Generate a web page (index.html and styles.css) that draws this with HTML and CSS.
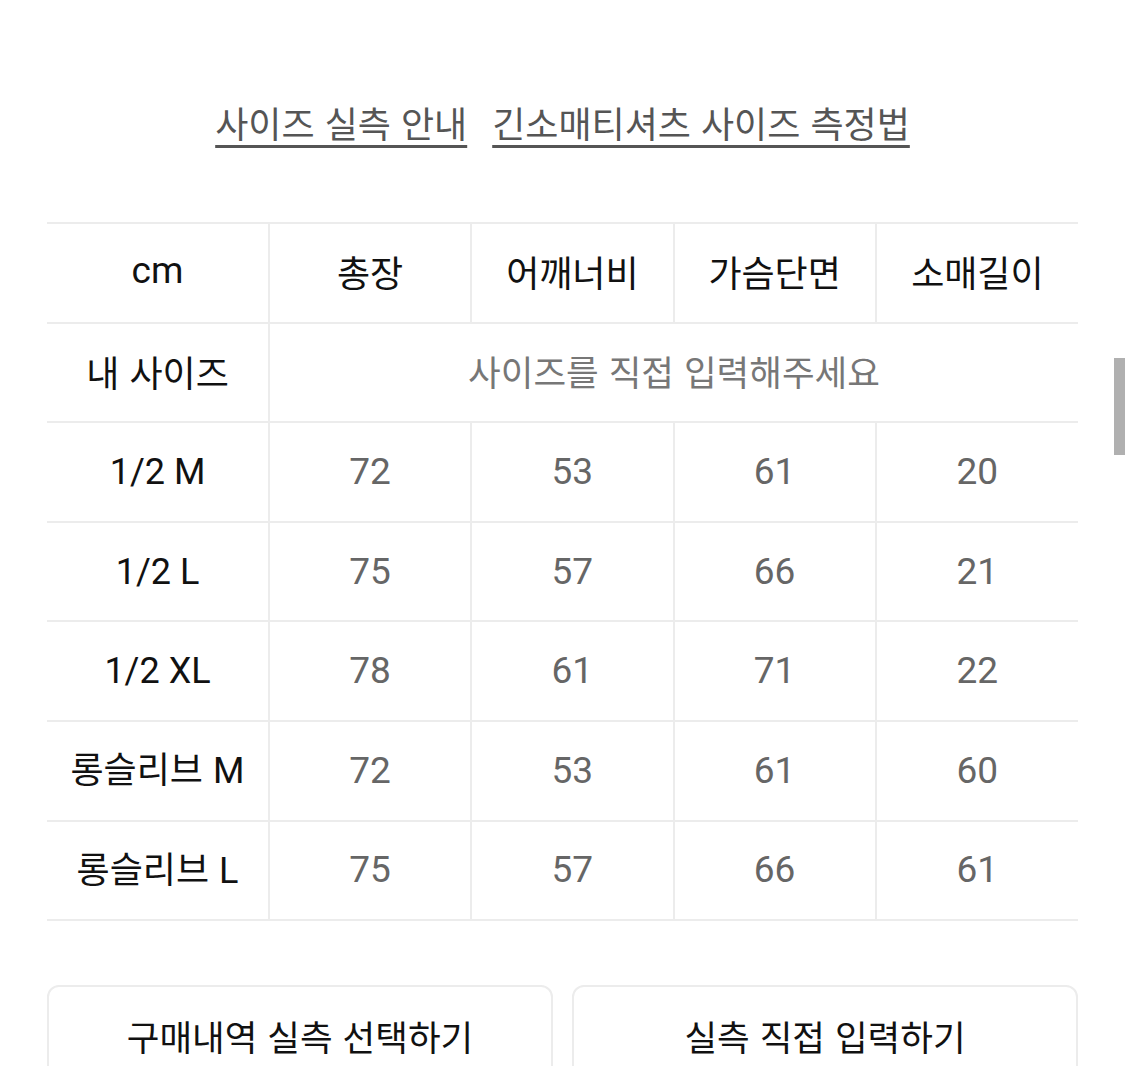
FILE: index.html
```html
<!DOCTYPE html>
<html lang="ko">
<head>
<meta charset="utf-8">
<link rel="stylesheet" href="styles.css">
</head>
<body>
<div class="page">
  <nav class="links">
    <a class="link">사이즈 실측 안내</a>
    <a class="link">긴소매티셔츠 사이즈 측정법</a>
  </nav>
  <table class="size-table">
    <colgroup>
      <col class="c-label"><col class="c-val"><col class="c-val"><col class="c-val"><col class="c-val">
    </colgroup>
    <thead>
      <tr>
        <th class="head lat">cm</th>
        <th class="head">총장</th>
        <th class="head">어깨너비</th>
        <th class="head">가슴단면</th>
        <th class="head">소매길이</th>
      </tr>
    </thead>
    <tbody>
      <tr>
        <th class="label">내 사이즈</th>
        <td class="placeholder" colspan="4">사이즈를 직접 입력해주세요</td>
      </tr>
      <tr><th class="label lat">1/2 M</th><td class="num">72</td><td class="num">53</td><td class="num">61</td><td class="num">20</td></tr>
      <tr><th class="label lat">1/2 L</th><td class="num">75</td><td class="num">57</td><td class="num">66</td><td class="num">21</td></tr>
      <tr><th class="label lat">1/2 XL</th><td class="num">78</td><td class="num">61</td><td class="num">71</td><td class="num">22</td></tr>
      <tr><th class="label">롱슬리브 <span class="lat">M</span></th><td class="num">72</td><td class="num">53</td><td class="num">61</td><td class="num">60</td></tr>
      <tr><th class="label">롱슬리브 <span class="lat">L</span></th><td class="num">75</td><td class="num">57</td><td class="num">66</td><td class="num">61</td></tr>
    </tbody>
  </table>
  <div class="actions">
    <button class="btn">구매내역 실측 선택하기</button>
    <button class="btn">실측 직접 입력하기</button>
  </div>
</div>
<div class="scroll-thumb"></div>
</body>
</html>
```

FILE: styles.css
```css
html, body {
  margin: 0;
  padding: 0;
  background: #fff;
  overflow: hidden;
}
body {
  font-family: Roboto, "Noto Sans CJK KR", sans-serif;
  color: #111;
}
.page {
  padding: 96px 47px 0 47px;
}
.links {
  display: flex;
  justify-content: center;
  gap: 25px;
  height: 126px;
}
.link {
  font-family: "Noto Sans CJK KR", sans-serif;
  font-size: 36px;
  line-height: 52px;
  height: 52px;
  color: #555;
  text-decoration: underline;
  text-decoration-thickness: 3px;
  text-underline-offset: 7px;
}
.size-table {
  width: 1031px;
  border-collapse: collapse;
  table-layout: fixed;
}
.c-label { width: 222px; }
.size-table th,
.size-table td {
  border-top: 2px solid #ececec;
  border-bottom: 2px solid #ececec;
  border-left: 2px solid #ececec;
  height: 99.6px;
  padding: 0 0 3px 0;
  line-height: 40px;
  text-align: center;
  vertical-align: middle;
  font-weight: 400;
  box-sizing: border-box;
}
.size-table tr > :first-child { border-left: none; }
.head {
  font-family: "Noto Sans CJK KR", sans-serif;
  font-size: 36px;
  color: #111;
}
.label {
  font-family: "Noto Sans CJK KR", sans-serif;
  font-size: 36px;
  color: #111;
}
.lat {
  font-family: Roboto, sans-serif;
  font-size: 36px;
}
.size-table .label.lat,
.size-table .num { padding-bottom: 0; }
.head.lat { font-size: 37px; }
.placeholder {
  font-family: "Noto Sans CJK KR", sans-serif;
  font-size: 35.5px;
  color: #777;
}
.num {
  font-family: Roboto, sans-serif;
  font-size: 37px;
  color: #666;
}
.actions {
  display: flex;
  gap: 19px;
  margin-top: 64px;
}
.btn {
  flex: 1;
  height: 110px;
  background: #fff;
  border: 2px solid #ececec;
  border-radius: 12px;
  font-family: "Noto Sans CJK KR", sans-serif;
  font-size: 35.5px;
  line-height: 40px;
  color: #111;
  padding: 0 0 8px 0;
  display: flex;
  align-items: center;
  justify-content: center;
}
.scroll-thumb {
  position: absolute;
  right: 0;
  top: 358px;
  width: 11px;
  height: 97px;
  background: #b0b0b0;
}
```
